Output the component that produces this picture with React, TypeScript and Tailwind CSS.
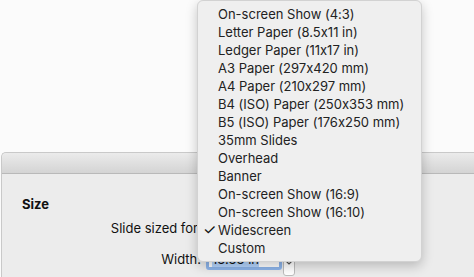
import React from "react";

const items = [
  "On-screen Show (4:3)",
  "Letter Paper (8.5x11 in)",
  "Ledger Paper (11x17 in)",
  "A3 Paper (297x420 mm)",
  "A4 Paper (210x297 mm)",
  "B4 (ISO) Paper (250x353 mm)",
  "B5 (ISO) Paper (176x250 mm)",
  "35mm Slides",
  "Overhead",
  "Banner",
  "On-screen Show (16:9)",
  "On-screen Show (16:10)",
  "Widescreen",
  "Custom",
];

export default function App() {
  return (
    <div
      className="relative w-[474px] h-[277px] overflow-hidden bg-[#fbfbfb] text-[13px] text-[#222] [font-feature-settings:'calt'_0]"
      style={{ fontFamily: "Inter, 'Liberation Sans', sans-serif" }}
    >
      <div className="h-[152px]" />
      <div className="ml-[1px] h-[125px] rounded-tl-[5px] border-t border-l border-[#c9c9c9] bg-[#ececec] flex flex-col">
        <div className="h-[21px] shrink-0 rounded-tl-[5px] bg-gradient-to-b from-[#ebebeb] to-[#d4d4d4] border-b border-[#b9b9b9]" />
        <div className="flex-1 flex flex-col text-[#111]">
          <div className="mt-[22px] pl-[20px] font-bold leading-[16px]">Size</div>
          <div className="mt-[8px] flex leading-[16px]">
            <div className="w-[196px] text-right">Slide sized for</div>
          </div>
          <div className="mt-[12px] flex items-start">
            <div className="w-[199px] text-right leading-[22px]">Width:</div>
            <div className="ml-[5px] w-[76px] h-[22px] rounded-[3px] border-[3px] border-[#8db4e9] bg-white flex items-center pl-[3px]">
              <span className="bg-[#b5d5fd] leading-[15px]">13.33 in</span>
            </div>
            <div className="ml-[1px] mt-[8px] w-[12px] h-[20px] rounded-[3px] border border-[#bdbdbd] bg-white flex justify-center pt-[3px]">
              <svg width="8" height="6" viewBox="0 0 8 6">
                <path d="M1.5 1.5 L4 4 L6.5 1.5" stroke="#555" strokeWidth="1.2" fill="none" />
              </svg>
            </div>
          </div>
        </div>
      </div>
      <div className="absolute left-[197px] top-[0px] w-[225px] h-[262px] rounded-[6px] bg-[#efefef] border border-[#d2d2d2] shadow-[0_4px_12px_rgba(0,0,0,0.22)] pt-[4px] flex flex-col">
        {items.map((t) => (
          <div key={t} className="flex h-[18px] shrink-0 items-center leading-[18px] text-[#222]">
            <span className="w-[20px] pl-[5px] text-[15px] text-[#111]">{t === "Widescreen" ? "✓" : ""}</span>
            <span>{t}</span>
          </div>
        ))}
      </div>
    </div>
  );
}
